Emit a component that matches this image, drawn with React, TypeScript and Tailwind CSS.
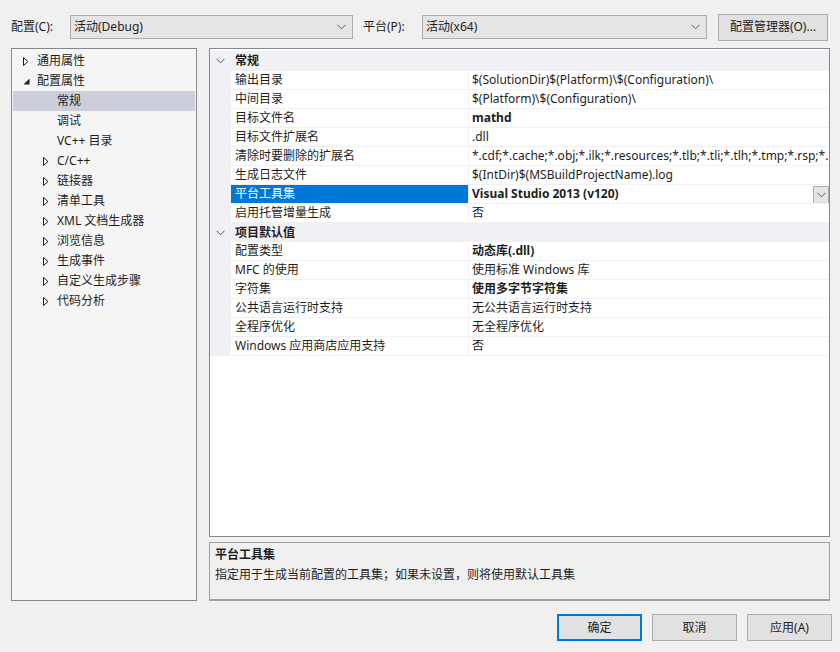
import React from 'react';

const FONT = '"Noto Sans", "Noto Sans CJK SC", sans-serif';

type TreeItem = { label: string; level: 0 | 1; state?: 'open' | 'closed'; selected?: boolean };

const TREE: TreeItem[] = [
  { label: '通用属性', level: 0, state: 'closed' },
  { label: '配置属性', level: 0, state: 'open' },
  { label: '常规', level: 1, selected: true },
  { label: '调试', level: 1 },
  { label: 'VC++ 目录', level: 1 },
  { label: 'C/C++', level: 1, state: 'closed' },
  { label: '链接器', level: 1, state: 'closed' },
  { label: '清单工具', level: 1, state: 'closed' },
  { label: 'XML 文档生成器', level: 1, state: 'closed' },
  { label: '浏览信息', level: 1, state: 'closed' },
  { label: '生成事件', level: 1, state: 'closed' },
  { label: '自定义生成步骤', level: 1, state: 'closed' },
  { label: '代码分析', level: 1, state: 'closed' },
];

type Prop = { name: string; value: string; bold?: boolean; selected?: boolean };
type Group = { title: string; props: Prop[] };

const GROUPS: Group[] = [
  {
    title: '常规',
    props: [
      { name: '输出目录', value: '$(SolutionDir)$(Platform)\\$(Configuration)\\' },
      { name: '中间目录', value: '$(Platform)\\$(Configuration)\\' },
      { name: '目标文件名', value: 'mathd', bold: true },
      { name: '目标文件扩展名', value: '.dll' },
      { name: '清除时要删除的扩展名', value: '*.cdf;*.cache;*.obj;*.ilk;*.resources;*.tlb;*.tli;*.tlh;*.tmp;*.rsp;*.pg' },
      { name: '生成日志文件', value: '$(IntDir)$(MSBuildProjectName).log' },
      { name: '平台工具集', value: 'Visual Studio 2013 (v120)', bold: true, selected: true },
      { name: '启用托管增量生成', value: '否' },
    ],
  },
  {
    title: '项目默认值',
    props: [
      { name: '配置类型', value: '动态库(.dll)', bold: true },
      { name: 'MFC 的使用', value: '使用标准 Windows 库' },
      { name: '字符集', value: '使用多字节字符集', bold: true },
      { name: '公共语言运行时支持', value: '无公共语言运行时支持' },
      { name: '全程序优化', value: '无全程序优化' },
      { name: 'Windows 应用商店应用支持', value: '否' },
    ],
  },
];

const Chevron = ({ className = '' }: { className?: string }) => (
  <svg width="9" height="6" viewBox="0 0 9 6" className={className}>
    <path d="M0.5 0.8 L4.5 4.8 L8.5 0.8" fill="none" stroke="currentColor" strokeWidth="1" />
  </svg>
);

const Combo = ({ text, width }: { text: string; width: string }) => (
  <div className={`${width} h-[24px] flex items-center justify-between bg-[#e5e5e5] border border-[#adadad] pl-[3px] pr-[6px]`}>
    <span>{text}</span>
    <Chevron className="text-[#606060]" />
  </div>
);

const TreeArrow = ({ state }: { state?: 'open' | 'closed' }) => {
  if (state === 'closed')
    return (
      <svg width="6" height="9" viewBox="0 0 6 9">
        <path d="M0.5 0.5 L5 4.5 L0.5 8.5 Z" fill="none" stroke="#1e1e1e" strokeWidth="1" />
      </svg>
    );
  if (state === 'open')
    return (
      <svg width="7" height="9" viewBox="0 0 7 9">
        <path d="M6.5 1.5 L6.5 7.5 L0.5 7.5 Z" fill="#1e1e1e" />
      </svg>
    );
  return null;
};

const Button = ({ label, primary }: { label: string; primary?: boolean }) => (
  <div
    className={`w-[85px] h-[27px] flex items-center justify-center bg-[#e1e1e1] ${
      primary ? 'border-2 border-[#0078d7]' : 'border border-[#adadad]'
    }`}
  >
    {label}
  </div>
);

export default function App() {
  return (
    <div className="w-[840px] h-[652px] bg-[#f0f0f0] text-[12px] text-[#1e1e1e] overflow-hidden" style={{ fontFamily: FONT }}>
      {/* top bar */}
      <div className="flex items-center h-[24px] mt-[15px] pl-[11px] leading-[16px]">
        <span className="w-[59px]">配置(C):</span>
        <Combo text="活动(Debug)" width="w-[283px]" />
        <span className="ml-[10px] w-[59px]">平台(P):</span>
        <Combo text="活动(x64)" width="w-[285px]" />
        <div className="ml-[11px] w-[110px] h-[27px] flex items-center justify-center bg-[#e1e1e1] border border-[#adadad]">
          配置管理器(O)...
        </div>
      </div>

      {/* main */}
      <div className="flex mt-[9px] ml-[11px] gap-[12px] h-[553px]">
        {/* tree */}
        <div className="w-[186px] h-full border border-[#828790] bg-[#f5f5f5] pt-[2px] px-[1px] leading-[20px]">
          {TREE.map((t) => (
            <div
              key={t.label}
              className={`h-[20px] flex items-center whitespace-nowrap ${t.selected ? 'bg-[#cccedb]' : ''} ${
                t.level === 0 ? 'pl-[10px]' : 'pl-[30px]'
              }`}
            >
              <span className="w-[14px] flex items-center">
                <TreeArrow state={t.state} />
              </span>
              <span>{t.label}</span>
            </div>
          ))}
        </div>

        {/* right */}
        <div className="w-[621px] h-full flex flex-col gap-[5px]">
          <div className="h-[489px] border border-[#828790] bg-white pt-[2px] leading-[16px] overflow-hidden">
            {GROUPS.map((g, gi) => (
              <div key={g.title}>
                <div className={`${gi === 0 ? 'h-[20px]' : 'h-[19px]'} flex items-center bg-[#f0f0f5]`}>
                  <span className="w-[21px] flex justify-center">
                    <Chevron className="text-[#555555]" />
                  </span>
                  <span className="font-bold pl-[4px]">{g.title}</span>
                </div>
                {g.props.map((p) => (
                  <div key={p.name} className="h-[19px] flex">
                    <div className="w-[21px] bg-[#f0f0f5] shrink-0" />
                    <div
                      className={`w-[237px] shrink-0 flex items-center pl-[4px] border-b border-[#f0f0f5] whitespace-nowrap ${
                        p.selected ? 'bg-[#0078d7] text-white border-[#0078d7]' : ''
                      }`}
                    >
                      {p.name}
                    </div>
                    <div className="flex-1 min-w-0 flex items-center border-l border-b border-[#f0f0f5] pl-[3px] relative overflow-hidden">
                      <span className={`whitespace-nowrap ${p.bold ? 'font-bold' : ''}`}>{p.value}</span>
                      {p.selected && (
                        <div className="absolute right-0 top-[1px] w-[16px] h-[18px] bg-[#e5e5e5] border border-[#acacac] flex items-center justify-center">
                          <Chevron className="text-[#606060]" />
                        </div>
                      )}
                    </div>
                  </div>
                ))}
              </div>
            ))}
          </div>

          {/* description */}
          <div className="flex-1 border border-[#a0a0a0] border-b-2 bg-[#f0f0f0] pl-[5px] pt-[2px] leading-[20px]">
            <div className="font-bold">平台工具集</div>
            <div>指定用于生成当前配置的工具集；如果未设置，则将使用默认工具集</div>
          </div>
        </div>
      </div>

      {/* buttons */}
      <div className="flex justify-end gap-[10px] mt-[13px] pr-[8px] leading-[16px]">
        <Button label="确定" primary />
        <Button label="取消" />
        <Button label="应用(A)" />
      </div>
    </div>
  );
}
